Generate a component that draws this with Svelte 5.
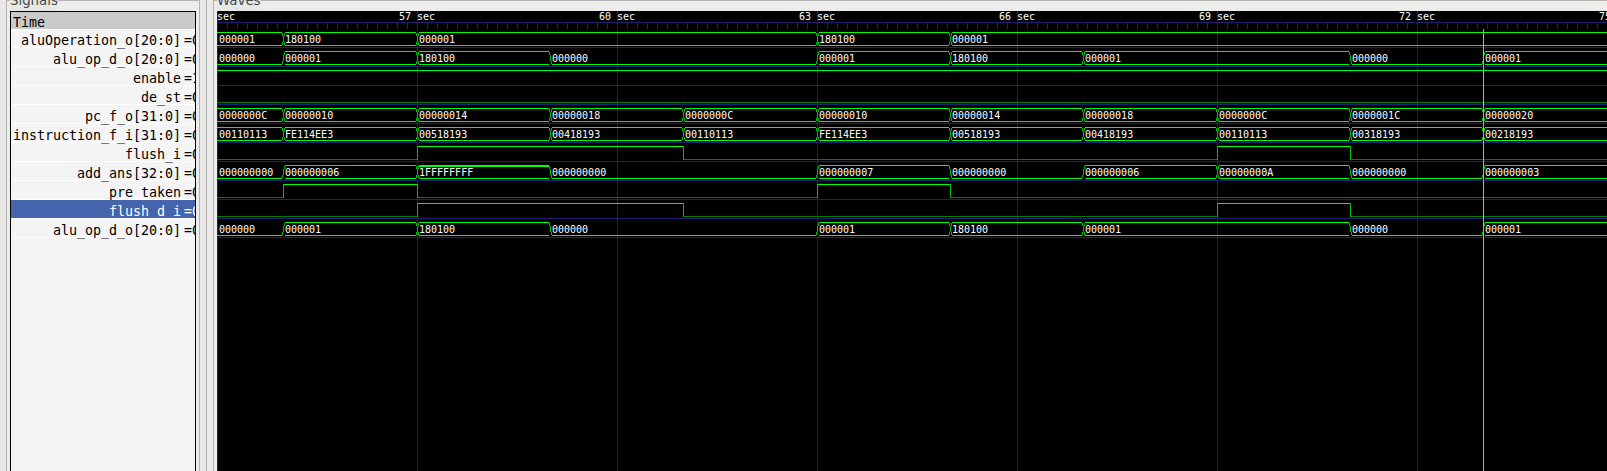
<script>
  const edge = (n) => Math.floor(283.67 + n * 133.333 + 0.01);
  const END = 1607;
  const START = 217;
  // Each entry: [edge index (-1 is the left margin), value]
  const pc = ['0000000C', '00000010', '00000014', '00000018', '0000000C', '00000010', '00000014', '00000018', '0000000C', '0000001C', '00000020'];
  const ins = ['00110113', 'FE114EE3', '00518193', '00418193', '00110113', 'FE114EE3', '00518193', '00418193', '00110113', '00318193', '00218193'];
  const aluOp = [[-1, '000000'], [0, '000001'], [1, '180100'], [2, '000000'], [4, '000001'], [5, '180100'], [6, '000001'], [8, '000000'], [9, '000001']];
  const all = (list) => list.map((v, i) => [i - 1, v]);
  const signals = [
    { name: 'aluOperation_o[20:0]', now: '=0', bus: [[-1, '000001'], [0, '180100'], [1, '000001'], [4, '180100'], [5, '000001']] },
    { name: 'alu_op_d_o[20:0]', now: '=0', bus: aluOp },
    { name: 'enable', now: '=1', bit: [[-1, 1]] },
    { name: 'de_st', now: '=0', bit: [[-1, 0]] },
    { name: 'pc_f_o[31:0]', now: '=0', bus: all(pc) },
    { name: 'instruction_f_i[31:0]', now: '=0', bus: all(ins) },
    { name: 'flush_i', now: '=0', bit: [[-1, 0], [1, 1], [3, 0], [7, 1], [8, 0]] },
    { name: 'add_ans[32:0]', now: '=0', bus: [[-1, '000000000'], [0, '000000006'], [1, '1FFFFFFFF'], [2, '000000000'], [4, '000000007'], [5, '000000000'], [6, '000000006'], [7, '00000000A'], [8, '000000000'], [9, '000000003']] },
    { name: 'pre_taken', now: '=0', bit: [[-1, 0], [0, 1], [1, 0], [4, 1], [5, 0]] },
    { name: 'flush_d_i', now: '=0', bit: [[-1, 0], [1, 1], [3, 0], [7, 1], [8, 0]], selected: true },
    { name: 'alu_op_d_o[20:0]', now: '=0', bus: aluOp }
  ];
  const x = (n) => (n < 0 ? START : edge(n)) - START;
  const spans = (list) =>
    list.map(([n, v], i) => ({
      v,
      first: n < 0,
      last: i === list.length - 1,
      a: x(n),
      b: i < list.length - 1 ? x(list[i + 1][0]) : END - START,
      zero: /^0+$/.test(String(v)),
      prevZero: i > 0 && /^0+$/.test(String(list[i - 1][1])),
      full: /^1F+$/.test(String(v))
    }));
  const ticks = Array.from({ length: 139 }, (_, i) => i * 10);
  const marks = [54, 57, 60, 63, 66, 69, 72, 75].map((t, i) => ({ t, x: i * 200 }));
</script>

<main>
  <section class="signals">
    <div class="caption">Signals</div>
    <div class="list">
      <div class="row head"><span>Time</span></div>
      {#each signals as s}
        <div class="row" class:selected={s.selected}>
          <span class="name">{s.name}</span><span class="now">{s.now}</span>
        </div>
      {/each}
    </div>
  </section>
  <div class="handle"></div>
  <section class="waves">
    <div class="caption">Waves</div>
    <svg width="1390" height="460" viewBox="0 0 1390 460" shape-rendering="crispEdges">
      <rect width="1390" height="460" fill="#000" />
      <g fill="#202070">
        <rect x="0" y="11" width="1390" height="1" />
        {#each ticks as t}
          <rect x={t} y="12" width="1" height="6" />
        {/each}
        {#each marks as m}
          <rect x={m.x} y="0" width="1" height="460" />
        {/each}
        {#each signals as s, i}
          <rect x="0" y={36 + 19 * i} width="1390" height="1" />
        {/each}
      </g>
      {#each marks as m}
        <text x={m.x - 18} y="9">{m.t} sec</text>
      {/each}
      {#each signals as s, i}
        <g transform="translate(0 {21 + 19 * i})">
          {#if s.bus}
            {#each spans(s.bus) as p}
              {@const l = p.first ? p.a : p.a + 2}
              {@const r = p.last ? p.b : p.b - 1}
              {#if !p.zero}
                <rect x={l} y="0" width={r - l} height={p.full ? 2 : 1} fill="#00ff00" />
              {/if}
              <rect x={l} y="13" width={r - l} height="1" fill="#00ff00" />
              {#if !p.first}
                {#if !p.prevZero}
                  <path d="M{p.a - 1} 1h1v3h-1zM{p.a} 4h1v3h-1z" fill="#00c000" />
                  <path d="M{p.a} 7h1v3h-1zM{p.a + 1} 10h1v3h-1z" fill="#00c000" />
                {/if}
                {#if !p.zero}
                  <path d="M{p.a + 1} 1h1v3h-1zM{p.a} 4h1v6h-1zM{p.a - 1} 10h1v3h-1z" fill="#00c000" />
                {/if}
              {/if}
              <text x={p.a + 2} y="11">{p.v}</text>
            {/each}
          {:else}
            {#each spans(s.bit) as p}
              <rect x={p.a} y={p.v ? 0 : 13} width={p.b - p.a + 1} height="1" fill={p.v ? '#00ff00' : '#008000'} />
              {#if !p.first}
                <rect x={p.a} y="0" width="1" height="14" fill="#00c000" />
              {/if}
            {/each}
          {/if}
        </g>
      {/each}
      <rect x="1266" y="18" width="1" height="442" fill="#ff8c8c" />
    </svg>
  </section>
</main>

<style>
  :global(body) { margin: 0; overflow: hidden; background: #e8e8e6; }
  main { display: flex; width: 1607px; height: 471px; overflow: hidden; background: #e8e8e6; }
  section { box-sizing: border-box; height: 471px; border-top: 1px solid #b4b4b2; }
  .signals { width: 194px; margin-left: 6px; padding: 0 3px; border-left: 1px solid #b4b4b2; border-right: 1px solid #b4b4b2; background: #ececeb; }
  .handle { box-sizing: border-box; width: 7px; border-right: 1px solid #b4b4b2; }
  .waves { flex: 1; margin-left: 6px; padding-left: 3px; border-left: 1px solid #b4b4b2; background: #ececeb; }
  .caption { width: max-content; height: 11px; margin-top: -1px; background: #e8e8e6; color: #454b4d; font: 13.333px/2px "DejaVu Sans", sans-serif; }
  .list { box-sizing: border-box; height: 460px; border: 1px solid #000; border-bottom: 0; background: #f4f4f4; overflow: hidden; }
  .row { box-sizing: border-box; display: flex; align-items: flex-end; height: 19px; border-bottom: 1px solid #fff; color: #000; font: 13.333px/12px "DejaVu Sans Mono", monospace; letter-spacing: -0.027px; white-space: pre; }
  .row span { transform: scaleY(1.07); transform-origin: 0 11px; }
  .head { height: 18px; padding-left: 2px; background: #cacaca; }
  .head + .row { height: 18px; }
  .name { width: 170px; text-align: right; flex: none; }
  .now { padding-left: 3px; }
  .selected { position: relative; z-index: 1; background: #4464ac; color: #fff; }
  svg { display: block; }
  text { fill: #fff; font: 10px "DejaVu Sans Mono", monospace; white-space: pre; }
</style>
